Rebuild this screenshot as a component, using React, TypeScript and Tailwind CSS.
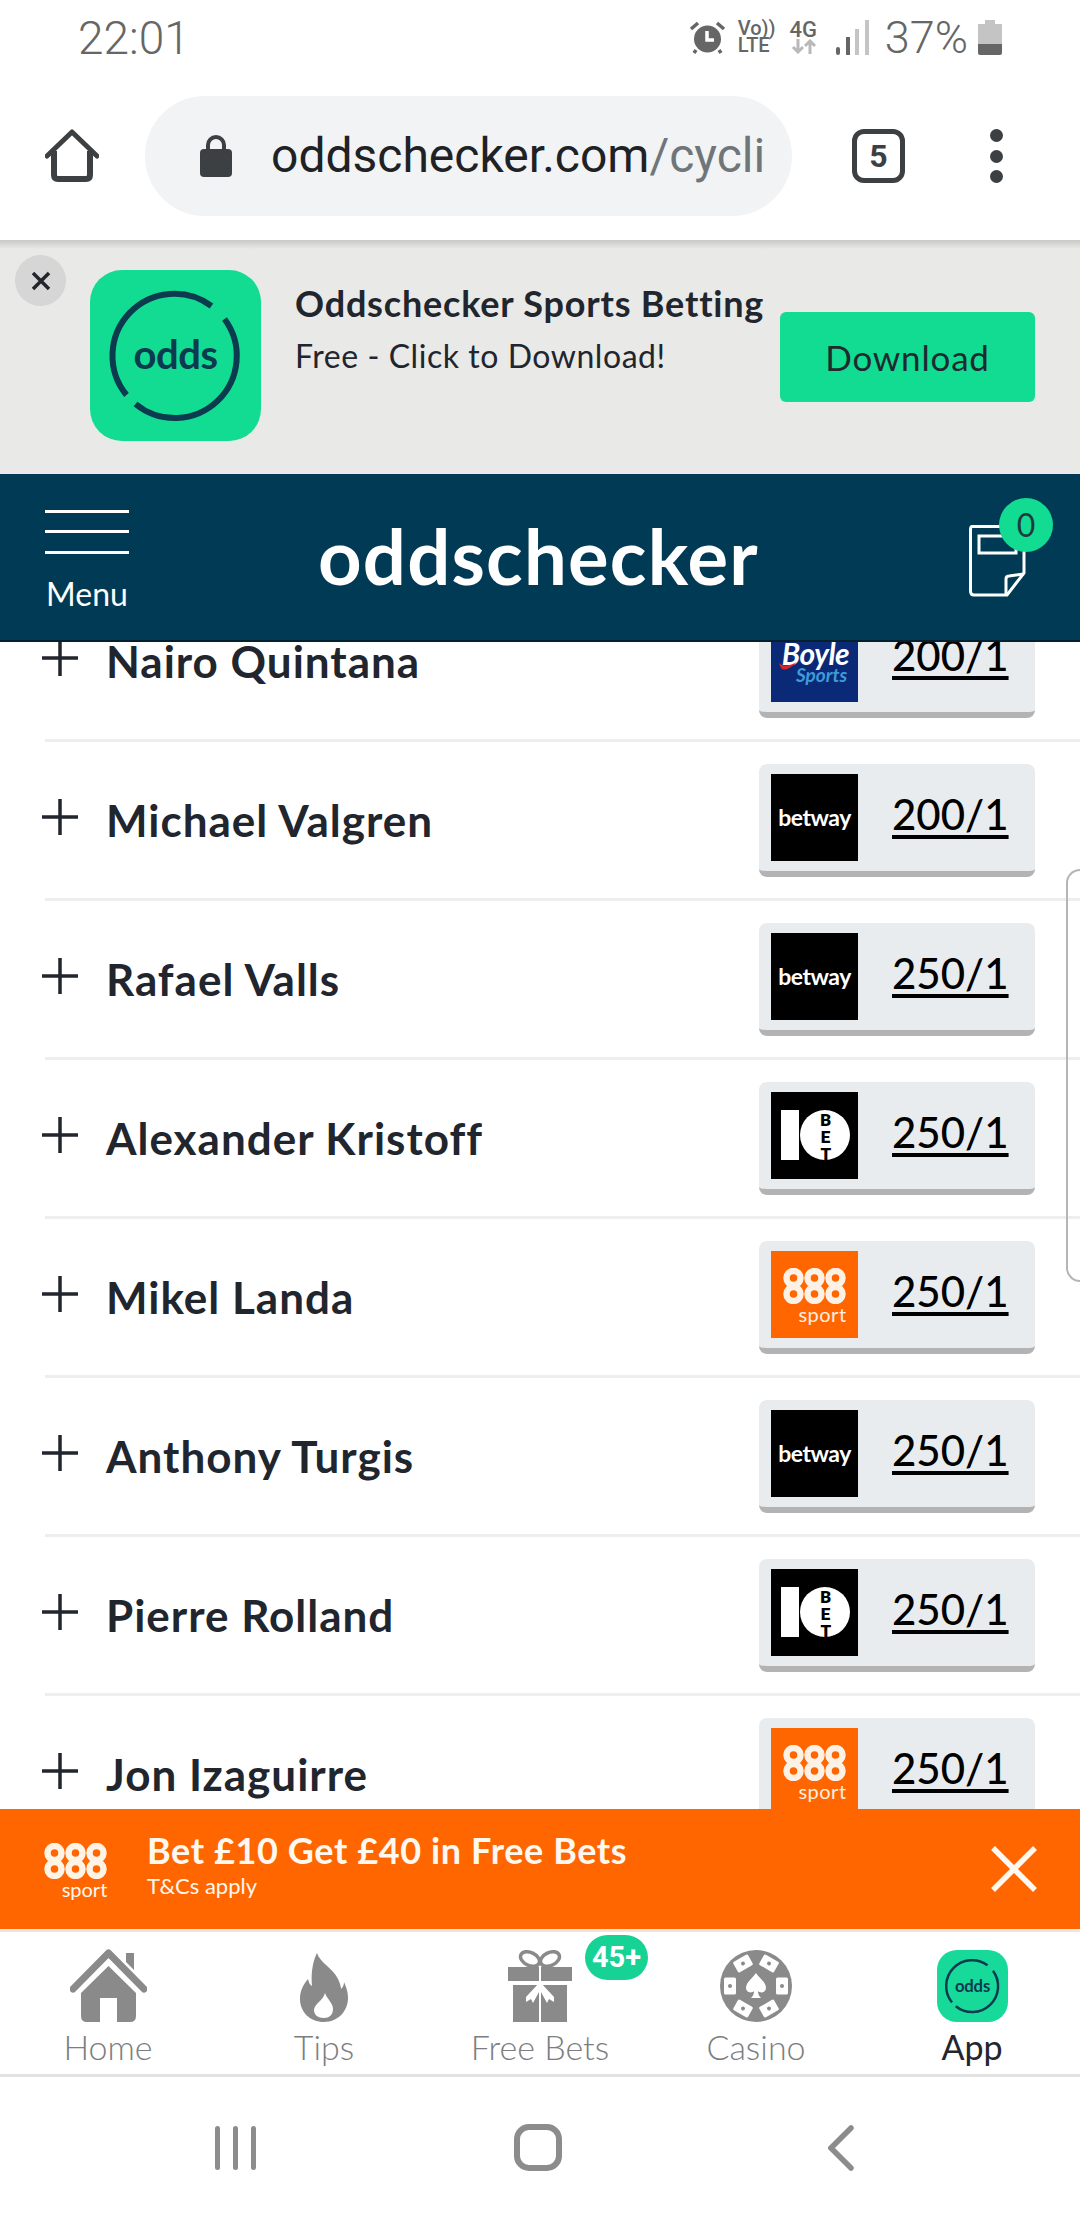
const riders = [
  { name: "Nairo Quintana", odds: "200/1", book: "boyle" },
  { name: "Michael Valgren", odds: "200/1", book: "betway" },
  { name: "Rafael Valls", odds: "250/1", book: "betway" },
  { name: "Alexander Kristoff", odds: "250/1", book: "tenbet" },
  { name: "Mikel Landa", odds: "250/1", book: "888" },
  { name: "Anthony Turgis", odds: "250/1", book: "betway" },
  { name: "Pierre Rolland", odds: "250/1", book: "tenbet" },
  { name: "Jon Izaguirre", odds: "250/1", book: "888" },
];

const OddsIcon = ({ className }: { className: string }) => (
  <svg viewBox="0 0 170 171" className={className}>
    <path d="M134 49 A62 62 0 0 1 45 134" fill="none" stroke="#0c3a4f" strokeWidth="6" />
    <path d="M36 125 A62 62 0 0 1 121 36" fill="none" stroke="#0c3a4f" strokeWidth="6" />
    <text x="85" y="99" textAnchor="middle" fontFamily="Lato, sans-serif" fontWeight="700" fontSize="40" letterSpacing="-0.5" fill="#0c3a4f">
      odds
    </text>
  </svg>
);

// the 888 mark, drawn as three pairs of rings
const Rings888 = ({ color }: { color: string }) => (
  <svg viewBox="0 0 65 36" className="w-[65px] h-[36px] block">
    {[11.5, 32.5, 53.5].map((cx) => (
      <g key={cx} fill="none" stroke={color} strokeWidth="6.5">
        <circle cx={cx} cy="10" r="7" />
        <circle cx={cx} cy="26" r="7" />
      </g>
    ))}
  </svg>
);

const BookLogo = ({ book }: { book: string }) => {
  if (book === "betway") {
    return (
      <div className="w-[87px] h-[87px] shrink-0 bg-black flex items-center justify-center text-white font-bold text-[23px] tracking-[-0.5px]">
        betway
      </div>
    );
  }
  if (book === "boyle") {
    return (
      <div className="relative w-[87px] h-[87px] shrink-0 bg-[#0a2a78] flex flex-col items-center justify-center pt-[7px]">
        <span className="text-white font-bold italic text-[30px] leading-[26px] tracking-[-0.5px] ml-[2px]">Boyle</span>
        <span className="text-[#3f9ad8] font-bold italic text-[19px] leading-[18px] ml-[14px]">Sports</span>
        <svg viewBox="0 0 18 8" className="absolute left-[8px] top-[47px] w-[18px] h-[8px]">
          <path d="M0 1C5 5 11 4 18 0C12 6 6 9 3 7Q1 5 0 1Z" fill="#d8232a" />
        </svg>
      </div>
    );
  }
  if (book === "tenbet") {
    return (
      <div className="w-[87px] h-[87px] shrink-0 bg-black flex items-center pl-[10px] gap-[1px]">
        <div className="w-[18px] h-[50px] bg-white" />
        <div className="w-[50px] h-[50px] rounded-full bg-white flex items-center justify-center">
          <span className="[writing-mode:vertical-rl] [text-orientation:upright] font-[Roboto,sans-serif] font-black text-black text-[17px] leading-none tracking-[-3px]">BET</span>
        </div>
      </div>
    );
  }
  return (
    <div className="w-[87px] h-[87px] shrink-0 bg-[#ff6600] flex flex-col items-center justify-center text-[#fdf0e4] pt-[3px]">
      <Rings888 color="#fdf0e4" />
      <span className="text-[20px] leading-[20px] ml-[16px] tracking-[0.5px]">sport</span>
    </div>
  );
};

const RiderRow = ({ name, odds, book }: { name: string; odds: string; book: string }) => (
  <div className="h-[159px] ml-[45px] shrink-0 border-b-[3px] border-[#eeeeee] flex items-center">
    <svg viewBox="0 0 36 36" className="w-[36px] h-[36px] -ml-[3px] -mt-[6px] shrink-0">
      <path d="M18 0V36M0 18H36" stroke="#21252e" strokeWidth="3.5" />
    </svg>
    <span className="ml-[28px] text-[44px] font-bold tracking-[1px] text-[#21252e] flex-1">{name}</span>
    <div className="w-[276px] h-[113px] mr-[45px] bg-[#e9ecef] rounded-[8px] border-b-[6px] border-[#b3b3b3] flex items-center pl-[12px]">
      <BookLogo book={book} />
      <span className="ml-[34px] text-[42px] leading-[50px] font-medium text-black underline decoration-[4px] underline-offset-[5px] -mt-[6px]">{odds}</span>
    </div>
  </div>
);

const StatusBar = () => (
  <div className="h-[80px] shrink-0 pl-[78px] pr-[78px] flex items-center justify-between font-[Roboto,sans-serif] text-[#666666]">
    <span className="text-[46px] font-light leading-none mt-[-4px]">22:01</span>
    <div className="flex items-center h-[40px] mt-[-6px]">
      <svg viewBox="0 0 37 33" className="w-[37px] h-[33px]">
        <circle cx="18.5" cy="18" r="13.5" fill="#666666" />
        <path d="M18 10V19H25" fill="none" stroke="#fff" strokeWidth="3.5" />
        <path d="M2 8L9 2M35 8L28 2M7 29L5 32M30 29L32 32" stroke="#666666" strokeWidth="3.5" />
      </svg>
      <div className="ml-[12px] w-[35px] flex flex-col text-[20px] leading-[17px] font-medium">
        <span>Vo))</span>
        <span>LTE</span>
      </div>
      <div className="ml-[17px] w-[27px] flex flex-col items-center text-[22px] leading-[18px] font-medium">
        <span>4G</span>
        <svg viewBox="0 0 27 15" className="w-[27px] h-[15px]">
          <path d="M8 0V13M3 8L8 13L13 8" fill="none" stroke="#b9b9b9" strokeWidth="3" />
          <path d="M20 15V2M15 7L20 2L25 7" fill="none" stroke="#b9b9b9" strokeWidth="3" />
        </svg>
      </div>
      <svg viewBox="0 0 33 35" className="ml-[19px] w-[33px] h-[35px]">
        <rect x="0" y="27" width="4" height="8" rx="2" fill="#666666" />
        <rect x="10" y="17" width="4" height="18" fill="#666666" />
        <rect x="19" y="9" width="4" height="26" fill="#c4c4c4" />
        <rect x="29" y="0" width="4" height="35" fill="#c4c4c4" />
      </svg>
      <span className="ml-[16px] text-[45px] font-light leading-none">37%</span>
      <svg viewBox="0 0 24 35" className="ml-[10px] w-[24px] h-[35px]">
        <path d="M7 0H17V4H24V24H0V4H7Z" fill="#c4c4c4" />
        <path d="M0 24H24V33Q24 35 22 35H2Q0 35 0 33Z" fill="#666666" />
      </svg>
    </div>
  </div>
);

const BrowserBar = () => (
  <div className="h-[160px] shrink-0 flex items-start pt-[16px] pl-[45px] font-[Roboto,sans-serif]">
    <svg viewBox="0 0 54 53" className="w-[54px] h-[53px] mt-[33px] shrink-0">
      <path d="M2 27L27 3L52 27" fill="none" stroke="#3c4043" strokeWidth="5" strokeLinecap="round" strokeLinejoin="round" />
      <path d="M9 22V46Q9 50 13 50H41Q45 50 45 46V22" fill="none" stroke="#3c4043" strokeWidth="6" />
    </svg>
    <div className="ml-[46px] w-[647px] h-[120px] rounded-full bg-[#f1f3f4] flex items-center pl-[55px] shrink-0">
      <svg viewBox="0 0 32 42" className="w-[32px] h-[42px] shrink-0">
        <path d="M8 16V10A8 8 0 0 1 24 10V16" fill="none" stroke="#3c4043" strokeWidth="4" />
        <rect x="0" y="14" width="32" height="28" rx="4" fill="#3c4043" />
      </svg>
      <span className="ml-[39px] text-[48px] whitespace-nowrap text-[#202124]">
        oddschecker.com<span className="text-[#70757a]">/cycli</span>
      </span>
    </div>
    <div className="ml-[60px] mt-[33px] w-[53px] h-[54px] rounded-[12px] border-[5px] border-[#3c4043] flex items-center justify-center text-[#3c4043] text-[32px] font-bold shrink-0">
      5
    </div>
    <div className="ml-[85px] mt-[33px] h-[54px] flex flex-col justify-between shrink-0">
      <span className="w-[13px] h-[13px] rounded-full bg-[#3c4043]" />
      <span className="w-[13px] h-[13px] rounded-full bg-[#3c4043]" />
      <span className="w-[13px] h-[13px] rounded-full bg-[#3c4043]" />
    </div>
  </div>
);

const AppBanner = () => (
  <div className="h-[234px] shrink-0 relative bg-[#e9e9e7] flex items-start pt-[30px] pl-[90px]">
    <div className="absolute top-0 left-0 right-0 h-[9px] bg-gradient-to-b from-[#c9c9c6] to-[#e9e9e7]" />
    <div className="absolute left-[15px] top-[15px] w-[51px] h-[51px] rounded-full bg-[#d6d6d6] flex items-center justify-center">
      <svg viewBox="0 0 20 20" className="w-[20px] h-[20px]">
        <path d="M2 2L18 18M18 2L2 18" stroke="#21252e" strokeWidth="3.5" />
      </svg>
    </div>
    <div className="w-[171px] h-[171px] rounded-[32px] bg-[#12dc92] shrink-0">
      <OddsIcon className="w-full h-full" />
    </div>
    <div className="ml-[34px] w-[490px] shrink-0 text-[#21252e]">
      <div className="text-[36px] font-bold leading-[40px] mt-[13px] tracking-[0.8px] whitespace-nowrap">Oddschecker Sports Betting</div>
      <div className="text-[32px] leading-[40px] mt-[13px] tracking-[0.55px] whitespace-nowrap">Free - Click to Download!</div>
    </div>
    <div className="absolute left-[780px] top-[72px] w-[255px] h-[90px] rounded-[6px] bg-[#12dc92] flex items-center justify-center text-[#1f2a30] text-[35px] tracking-[0.8px]">
      Download
    </div>
  </div>
);

const SiteHeader = () => (
  <div className="h-[168px] shrink-0 relative z-10 bg-[#003a54] border-b-[2px] border-[#04202e] flex items-center pl-[45px] text-white">
    <div className="w-[84px] flex flex-col items-center mt-[7px]">
      <div className="w-full flex flex-col gap-[17.5px] mb-[22px]">
        <span className="block h-[3px] bg-white" />
        <span className="block h-[3px] bg-white" />
        <span className="block h-[3px] bg-white" />
      </div>
      <span className="text-[32px] leading-[36px]">Menu</span>
    </div>
    <span className="ml-[189px] text-[76px] leading-none font-bold tracking-[1.2px] mt-[-2px]">oddschecker</span>
    <div className="relative ml-auto w-[111px] h-[166px]">
      <svg viewBox="0 0 57 72" className="absolute left-0 top-[51px] w-[57px] h-[72px]">
        <path d="M3 1.5H50Q55 1.5 55 6V48L38 70H5Q1.5 70 1.5 66V5Q1.5 1.5 3 1.5Z" fill="none" stroke="#fff" strokeWidth="3" />
        <path d="M37 70V54Q37 51 40 51L55 49" fill="none" stroke="#fff" strokeWidth="3" />
        <rect x="10" y="11" width="37" height="17" fill="none" stroke="#fff" strokeWidth="3" />
      </svg>
      <div className="absolute left-[30px] top-[24px] w-[54px] h-[54px] rounded-full bg-[#12dc92] flex items-center justify-center text-[#1f3a3f] text-[32px]">
        0
      </div>
    </div>
  </div>
);

const PromoBar = () => (
  <div className="h-[120px] shrink-0 relative z-10 bg-[#ff6600] flex items-center pl-[43px] text-[#fff8f0]">
    <div className="w-[65px] flex flex-col items-center mt-[4px]">
      <Rings888 color="#fff3e6" />
      <span className="text-[20px] leading-[20px] ml-[18px]">sport</span>
    </div>
    <div className="ml-[39px] flex-1 mt-[-10px]">
      <div className="text-[36px] font-bold leading-[42px] tracking-[0.6px]">Bet £10 Get £40 in Free Bets</div>
      <div className="text-[22px] leading-[26px] mt-[2px]">T&amp;Cs apply</div>
    </div>
    <svg viewBox="0 0 46 46" className="w-[46px] h-[46px] mr-[43px]">
      <path d="M2 2L44 44M44 2L2 44" stroke="#fff8f0" strokeWidth="5.5" />
    </svg>
  </div>
);

const TabItem = ({ label, dark, children }: { label: string; dark?: boolean; children: React.ReactNode }) => (
  <div className="relative flex flex-col items-center">
    <div className="h-[74px] flex items-end justify-center">{children}</div>
    <span className={`text-[34px] leading-[40px] mt-[5px] font-light ${dark ? "text-[#23262e] font-normal" : "text-[#7b7d80]"}`}>{label}</span>
  </div>
);

const chipTiles = [-120, -60, 0, 60, 120, 180];

const TabBar = () => (
  <div className="h-[148px] shrink-0 bg-white border-t-[3px] border-b-[3px] border-t-[#efe6e0] border-b-[#e2e2e2] grid grid-cols-5 pt-[16px]">
    <TabItem label="Home">
      <svg viewBox="0 0 77 74" className="w-[77px] h-[74px]">
        <path d="M56 5H64V22L56 14Z" fill="#8a8a8a" />
        <path d="M3 41L38.5 5L74 41" fill="none" stroke="#8a8a8a" strokeWidth="7" strokeLinecap="round" strokeLinejoin="round" />
        <path d="M38.500 18L66 45V68Q66 74 60 74H47V50H30V74H17Q11 74 11 68V45Z" fill="#8a8a8a" />
      </svg>
    </TabItem>
    <TabItem label="Tips">
      <svg viewBox="0 0 48 69" className="w-[48px] h-[69px]">
        <path d="M17 0C20 10 32 14 38 26C40 30 41 34 41 36C43 34 44 32 44 29C47 36 48 40 48 45C48 58 38 69 24 69C10 69 0 59 0 46C0 38 3 32 8 26C9 30 10 32 12 33C11 22 12 10 17 0Z" fill="#8a8a8a" />
        <path d="M25 40C27 46 33 50 33 56C33 62 29 65 24 65C18 65 14 62 14 57C14 51 23 48 25 40Z" fill="#fff" />
      </svg>
    </TabItem>
    <div className="relative">
      <TabItem label="Free Bets">
        <svg viewBox="0 0 64 72" className="w-[64px] h-[72px]">
          <ellipse cx="22" cy="9" rx="10" ry="6.5" transform="rotate(25 22 9)" fill="none" stroke="#8a8a8a" strokeWidth="3.5" />
          <ellipse cx="42" cy="9" rx="10" ry="6.5" transform="rotate(-25 42 9)" fill="none" stroke="#8a8a8a" strokeWidth="3.5" />
          <rect x="0" y="17" width="31" height="14" fill="#8a8a8a" />
          <rect x="33" y="17" width="31" height="14" fill="#8a8a8a" />
          <rect x="5" y="35" width="26" height="37" fill="#8a8a8a" />
          <rect x="33" y="35" width="26" height="37" fill="#8a8a8a" />
          <path d="M31 33L18 47L18 52L23 49L25 53L31 42ZM33 33L46 47L46 52L41 49L39 53L33 42Z" fill="#fff" />
        </svg>
      </TabItem>
      <div className="absolute left-[153px] top-[-13px] w-[63px] h-[45px] rounded-full bg-[#17d295] flex items-center justify-center text-white text-[29px] font-bold font-[Roboto,sans-serif]">
        45+
      </div>
    </div>
    <TabItem label="Casino">
      <svg viewBox="-36 -36 72 72" className="w-[72px] h-[72px]">
        <circle r="36" fill="#8a8a8a" />
        {chipTiles.map((angle) => (
          <g key={angle} transform={`rotate(${angle}) translate(26 0)`}>
            <rect x="-6" y="-8.500" width="12" height="17" rx="1.500" fill="#fff" />
            <circle r="2" fill="#8a8a8a" />
          </g>
        ))}
        <path d="M0 -13C4 -7 10 -4 10 2C10 6 5 8 2 5C2 8 3 10 5 12L-5 12C-3 10 -2 8 -2 5C-5 8 -10 6 -10 2C-10 -4 -4 -7 0 -13Z" fill="#fff" />
      </svg>
    </TabItem>
    <TabItem label="App" dark>
      <div className="w-[71px] h-[72px] rounded-[20px] bg-[#17d99a]">
        <OddsIcon className="w-full h-full" />
      </div>
    </TabItem>
  </div>
);

const NavBar = () => (
  <div className="flex-1 bg-white flex items-center pl-[215px] pb-[2px]">
    <div className="flex gap-[13px]">
      <span className="w-[5px] h-[44px] rounded-full bg-[#8c8c8c]" />
      <span className="w-[5px] h-[44px] rounded-full bg-[#8c8c8c]" />
      <span className="w-[5px] h-[44px] rounded-full bg-[#8c8c8c]" />
    </div>
    <div className="ml-[258px] w-[48px] h-[47px] rounded-[15px] border-[6px] border-[#8c8c8c]" />
    <svg viewBox="0 0 26 46" className="ml-[266px] w-[26px] h-[46px]">
      <path d="M23 3L3 23L23 43" fill="none" stroke="#8c8c8c" strokeWidth="5.500" strokeLinecap="round" />
    </svg>
  </div>
);

export default function App() {
  return (
    <div className="relative w-[1080px] h-[2220px] overflow-hidden bg-white flex flex-col font-[Lato,sans-serif]">
      <StatusBar />
      <BrowserBar />
      <AppBanner />
      <SiteHeader />
      <div className="h-[1167px] shrink-0 overflow-hidden">
        <div className="-mt-[59px] flex flex-col">
          {riders.map((rider) => (
            <RiderRow key={rider.name} {...rider} />
          ))}
        </div>
      </div>
      <PromoBar />
      <TabBar />
      <NavBar />
      {/* edge panel handle */}
      <div className="absolute right-0 top-[869px] w-[14px] h-[413px] rounded-l-[16px] border-2 border-r-0 border-[#b5b5b5]" />
    </div>
  );
}
